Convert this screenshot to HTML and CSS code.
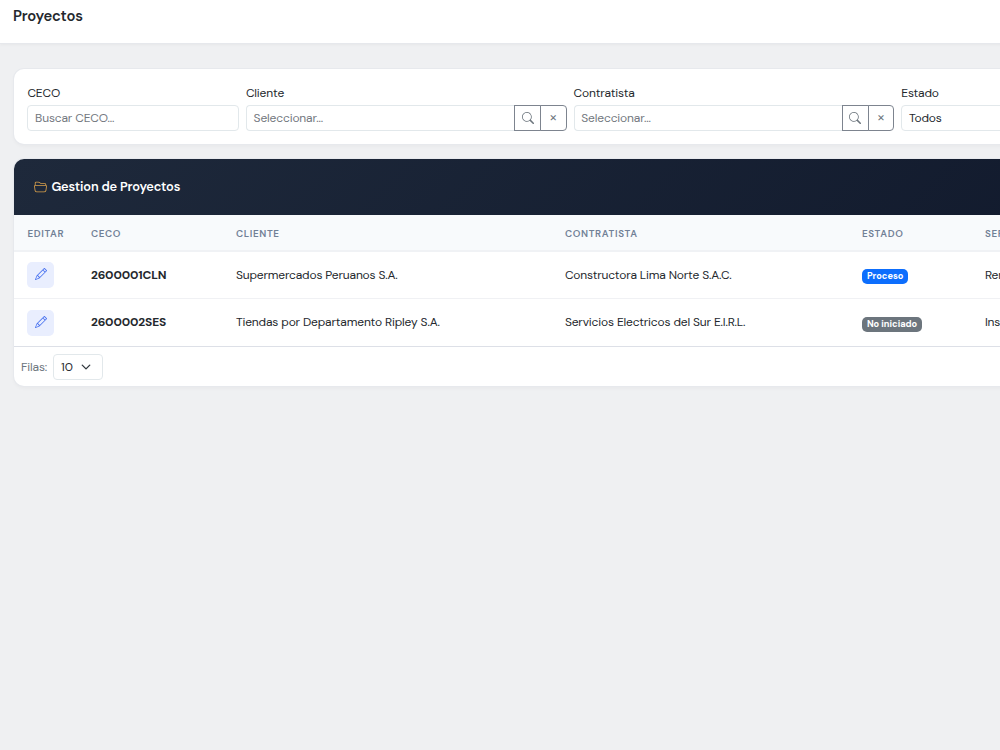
FILE: index.html
```html
<!DOCTYPE html>
<html lang="es">
<head>
<meta charset="utf-8">
<title>Proyectos</title>
<link rel="stylesheet" href="styles.css">
</head>
<body>
<svg class="defs" width="0" height="0" aria-hidden="true">
  <symbol id="search" viewBox="0 0 16 16"><path d="M11.742 10.344a6.5 6.5 0 1 0-1.397 1.398h-.001q.044.06.098.115l3.85 3.85a1 1 0 0 0 1.415-1.414l-3.85-3.85a1 1 0 0 0-.115-.1zM12 6.5a5.5 5.5 0 1 1-11 0 5.5 5.5 0 0 1 11 0"/></symbol>
  <symbol id="pencil" viewBox="0 0 16 16"><path d="M12.146.146a.5.5 0 0 1 .708 0l3 3a.5.5 0 0 1 0 .708l-10 10a.5.5 0 0 1-.168.11l-5 2a.5.5 0 0 1-.65-.65l2-5a.5.5 0 0 1 .11-.168zM11.207 2.5 13.5 4.793 14.793 3.5 12.5 1.207zm1.586 3L10.5 3.207 4 9.707V10h.5a.5.5 0 0 1 .5.5v.5h.5a.5.5 0 0 1 .5.5v.5h.293zm-9.761 5.175-.106.106-1.528 3.821 3.821-1.528.106-.106A.5.5 0 0 1 5 12.5V12h-.5a.5.5 0 0 1-.5-.5V11h-.5a.5.5 0 0 1-.468-.325"/></symbol>
  <symbol id="folder" viewBox="0 0 16 16"><path d="M1 3.5A1.5 1.5 0 0 1 2.5 2h2.764c.958 0 1.76.56 2.311 1.184C7.985 3.648 8.48 4 9 4h4.5A1.5 1.5 0 0 1 15 5.5v.64c.57.265.94.876.856 1.546l-.64 5.124A2.5 2.5 0 0 1 12.733 15H3.266a2.5 2.5 0 0 1-2.481-2.19l-.64-5.124A1.5 1.5 0 0 1 1 6.14zM2 6h12v-.5a.5.5 0 0 0-.5-.5H9c-.964 0-1.71-.629-2.174-1.154C6.374 3.334 5.82 3 5.264 3H2.5a.5.5 0 0 0-.5.5zm-.367 1a.5.5 0 0 0-.496.562l.64 5.124A1.5 1.5 0 0 0 3.266 14h9.468a1.5 1.5 0 0 0 1.489-1.314l.64-5.124A.5.5 0 0 0 14.367 7z"/></symbol>
</svg>
<header class="topbar"><h1 class="title">Proyectos</h1></header>
<main class="content">
  <section class="card filters">
    <div class="field narrow"><label>CECO</label><div class="control muted">Buscar CECO...</div></div>
    <div class="field wide"><label>Cliente</label>
      <div class="group"><div class="control muted">Seleccionar...</div><button class="btn"><svg><use href="#search"/></svg></button><button class="btn last">×</button></div></div>
    <div class="field wide"><label>Contratista</label>
      <div class="group"><div class="control muted">Seleccionar...</div><button class="btn"><svg><use href="#search"/></svg></button><button class="btn last">×</button></div></div>
    <div class="field narrow"><label>Estado</label><div class="control">Todos</div></div>
  </section>
  <section class="card projects">
    <div class="card-head"><svg><use href="#folder"/></svg><h2>Gestion de Proyectos</h2></div>
    <div class="row head"><span>EDITAR</span><span>CECO</span><span>CLIENTE</span><span>CONTRATISTA</span><span>ESTADO</span><span>SERVICIO</span></div>
    <div class="row"><span class="edit"><svg><use href="#pencil"/></svg></span><strong>2600001CLN</strong><span>Supermercados Peruanos S.A.</span><span>Constructora Lima Norte S.A.C.</span><span class="badge blue">Proceso</span><span>Remodelacion</span></div>
    <div class="row end"><span class="edit"><svg><use href="#pencil"/></svg></span><strong>2600002SES</strong><span>Tiendas por Departamento Ripley S.A.</span><span>Servicios Electricos del Sur E.I.R.L.</span><span class="badge gray">No iniciado</span><span>Instalacion</span></div>
    <div class="foot"><span class="rows-label">Filas:</span><div class="select"><span>10</span><svg viewBox="0 0 16 16"><path d="m2 5 6 6 6-6"/></svg></div></div>
  </section>
</main>
</body>
</html>
```
FILE: styles.css
```css
* { box-sizing: border-box; }
html, body { height: 100%; overflow: hidden; }
body { margin: 0; background: #eff0f2; color: #24282d; font: 12px/17px "DM Sans", Inter, sans-serif; letter-spacing: -.15px; }
h1, h2 { margin: 0; }
.defs { display: block; height: 0; }
.topbar { height: 44px; padding: 7px 13px; background: #fff; border-bottom: 1px solid #e6e8ec; box-shadow: 0 1px 3px rgba(0,0,0,.04); width: 1364px; }
.title { font-size: 14.8px; line-height: 19px; font-weight: 600; }
.content { width: 1351px; padding: 25px 0 0 14px; display: flex; flex-direction: column; gap: 15px; }
.card { background: #fff; border-radius: 10px; box-shadow: 0 0 0 1px #e7e9ed, 0 2px 4px rgba(0,0,0,.04); }
.filters { display: flex; gap: 7px; height: 75px; padding: 15px 13.4px 0; }
.field { flex: none; }
.narrow { width: 211.5px; }
.wide { width: 320.7px; }
.field label { display: block; height: 21px; line-height: 18px; }
.control { flex: 1; height: 26px; padding: 0 6.7px; border: 1px solid #e2e8eb; border-radius: 4px; line-height: 24px; }
.muted { color: #737880; }
.group { display: flex; }
.group .control { border-right: 0; border-radius: 4px 0 0 4px; }
.btn { width: 26.6px; height: 26px; padding: 0; border: 1px solid #7d848f; background: #fff; color: #6c757d; display: grid; place-items: center; }
.btn svg { width: 12px; height: 12px; fill: currentColor; }
.last { margin-left: -1px; padding-bottom: 2px; border-radius: 0 4px 4px 0; font: 12px/12px Inter, sans-serif; }
.projects { overflow: hidden; height: 227px; }
.card-head { display: flex; align-items: center; gap: 4.4px; height: 56px; padding: 0 20px 1px; background: linear-gradient(135deg, #1e293b, #0f172a); color: #fff; }
.card-head svg { width: 13px; height: 13px; fill: #d9a04b; }
h2 { font-size: 12.8px; font-weight: 600; }
.row { display: grid; grid-template-columns: 63.5px 145px 329px 297px 123px 1fr; align-items: center; height: 47px; padding-left: 13.4px; border-bottom: 1px solid #f0f1f4; }
.head { height: 37px; padding-top: 1px; background: #f8fafc; color: #718096; font-size: 9.8px; font-weight: 600; letter-spacing: .65px; border-bottom: 2px solid #f0f2f5; }
.end { height: 48px; border-bottom: 1px solid #dde0e7; }
.edit { width: 27px; height: 26px; border-radius: 5px; background: #e9eefe; display: grid; place-items: center; }
.edit svg { width: 12px; height: 12px; margin-top: -2px; fill: #4b74f0; }
strong { font-weight: 700; }
.badge { justify-self: start; height: 15px; margin-top: 3px; padding: 0 5px; border-radius: 5px; color: #fff; font-size: 9.2px; line-height: 15px; font-weight: 700; letter-spacing: 0; }
.blue { background: #0d6efd; }
.gray { background: #6c757d; }
.foot { display: flex; align-items: center; gap: 6px; height: 40px; padding-left: 7px; }
.rows-label { color: #6c757d; }
.select { display: flex; align-items: center; gap: 8px; width: 50px; height: 26px; padding: 0 7px; border: 1px solid #e2e8eb; border-radius: 4px; }
.select svg { width: 10px; height: 10px; fill: none; stroke: #343a40; stroke-width: 2.2; stroke-linecap: round; stroke-linejoin: round; }
```
